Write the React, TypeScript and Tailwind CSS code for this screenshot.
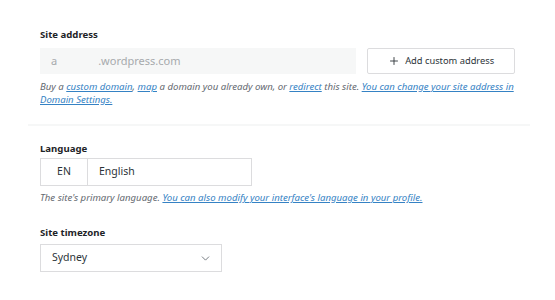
import { Plus, ChevronDown } from "lucide-react";

export default function App() {
  const font = { fontFamily: '"Noto Sans", "Open Sans", sans-serif' };

  return (
    <main className="min-h-[300px] w-[555px] bg-white text-[#1d2327]" style={font}>
      <div className="px-[28px] pt-[28px]">
        {/* Site address */}
        <section className="px-3 pb-[18px]">
          <p className="text-[9.6px] font-bold leading-[14px]">Site address</p>
          <div className="mt-[6px] flex gap-[11px]">
            <div className="flex h-[26px] w-[317px] items-center bg-[#f6f7f7] px-[11px] text-[11px] text-[#a7aaad]">
              <span>a</span>
              <span className="ml-[41px]">.wordpress.com</span>
            </div>
            <button className="flex h-[26px] w-[148px] items-center justify-center gap-[5px] rounded-[2px] border border-[#dcdcde] bg-white text-[9.3px] text-[#2c3338]">
              <Plus size={12} strokeWidth={1.8} />
              Add custom address
            </button>
          </div>
          <p className="mt-[6px] text-[9.6px] italic leading-[13px] text-[#646970]">
            Buy a{" "}
            <a className="text-[#3582c4] underline">custom domain</a>,{" "}
            <a className="text-[#3582c4] underline">map</a> a domain you already
            own, or <a className="text-[#3582c4] underline">redirect</a> this
            site.{" "}
            <a className="text-[#3582c4] underline">
              You can change your site address in Domain Settings.
            </a>
          </p>
        </section>

        <div className="h-[2px] w-[502px] bg-[#f6f7f7]" />

        {/* Language */}
        <section className="px-3 pt-[16px]">
          <p className="text-[9.6px] font-bold leading-[14px]">Language</p>
          <div className="mt-[2px] flex h-[28px] w-[212px] border border-[#dcdcde] text-[10.5px] text-[#2c3338]">
            <div className="flex w-[47px] items-center justify-center border-r border-[#dcdcde]">
              EN
            </div>
            <div className="flex items-center px-[11px]">English</div>
          </div>
          <p className="mt-[5px] text-[9.6px] italic leading-[13px] text-[#646970]">
            The site's primary language.{" "}
            <a className="text-[#3582c4] underline">
              You can also modify your interface's language in your profile.
            </a>
          </p>

          {/* Site timezone */}
          <p className="mt-[22px] text-[9.6px] font-bold leading-[14px]">Site timezone</p>
          <div className="mt-[4px] flex h-[28px] w-[182px] items-center justify-between border border-[#dcdcde] pl-[11px] pr-[9px] text-[10.5px] text-[#2c3338]">
            <span>Sydney</span>
            <ChevronDown size={13} strokeWidth={1.6} className="text-[#646970]" />
          </div>
        </section>
      </div>
    </main>
  );
}
